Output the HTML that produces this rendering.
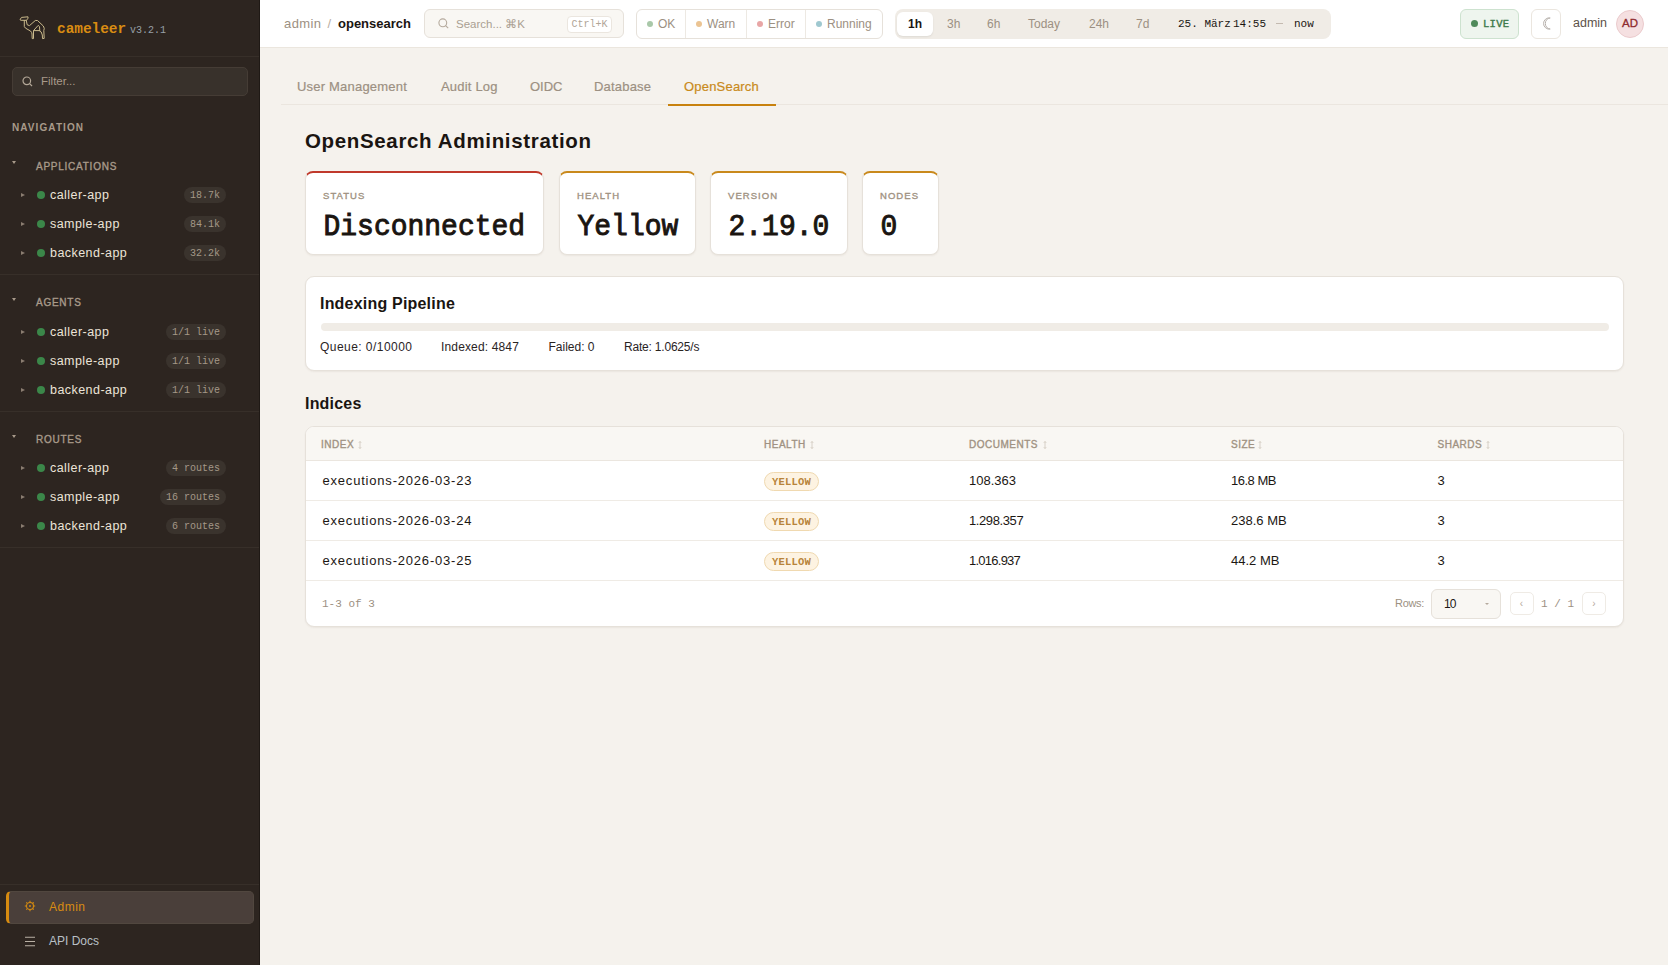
<!DOCTYPE html>
<html><head><meta charset="utf-8">
<style>
*{box-sizing:border-box;margin:0;padding:0}
html,body{width:1668px;height:965px;overflow:hidden}
body{font-family:"Liberation Sans",sans-serif;background:#f5f2ed;color:#1c1713;position:relative}
.mono{font-family:"Liberation Mono",monospace}
.abs{position:absolute;white-space:nowrap;line-height:1}
#sb{position:absolute;left:0;top:0;width:260px;height:965px;background:#2d2520;border-right:1px solid #1f1915}
.sdiv{position:absolute;left:0;width:259px;height:1px;background:#372f29}
.filter{position:absolute;left:12px;top:67px;width:236px;height:29px;border:1px solid #453c35;background:#38312b;border-radius:5px}
.navlbl{position:absolute;left:12px;font-size:10px;font-weight:bold;letter-spacing:1.08px;color:#a89a8a;line-height:1}
.sec{position:absolute;left:36px;font-size:10px;font-weight:normal;-webkit-text-stroke:0.35px #a89a8a;letter-spacing:0.75px;color:#a89a8a;line-height:1}
.caret{position:absolute;left:12px;width:0;height:0;border-left:2px solid transparent;border-right:2px solid transparent;border-top:3px solid #a89a8a}
.item{position:absolute;left:0;width:259px;height:16px}
.item .tri{position:absolute;left:21px;top:6px;width:0;height:0;border-top:2px solid transparent;border-bottom:2px solid transparent;border-left:4px solid #8a7d70}
.item .dot{position:absolute;left:36.5px;top:4px;width:8px;height:8px;border-radius:50%;background:#3b8749}
.item .nm{position:absolute;left:50px;top:2px;font-size:12.5px;letter-spacing:0.45px;color:#ece4d8;line-height:1;white-space:nowrap}
.item .bd{position:absolute;right:33px;top:0;height:16px;padding:0 6px;border-radius:8px;background:#3a332d;color:#a49888;font-family:"Liberation Mono",monospace;font-size:10px;line-height:18px;white-space:nowrap}
#top{position:absolute;left:260px;top:0;width:1408px;height:48px;background:#fff;border-bottom:1px solid #ebe6de}
.box{position:absolute;border:1px solid #e6e1da;border-radius:6px}
.sd{position:absolute;width:6px;height:6px;border-radius:50%}
.gray{color:#9c9082}
.card{position:absolute;background:#fff;border:1px solid #e6e1da;border-radius:9px;box-shadow:0 1px 2px rgba(60,40,20,0.06)}
.stat{position:absolute;background:#fff;border:1px solid #e6e1da;border-top:2.5px solid #c9891c;border-radius:8px;top:171px;height:84px;box-shadow:0 1px 2px rgba(60,40,20,0.06)}
.stat .lb{position:absolute;left:17px;top:18px;font-size:9.5px;font-weight:normal;-webkit-text-stroke:0.35px #a09282;letter-spacing:1.05px;color:#a09282;line-height:1}
.stat .vl{position:absolute;left:17.5px;top:40.5px;font-family:"Liberation Mono",monospace;font-size:28px;font-weight:normal;-webkit-text-stroke:0.9px #1a1511;color:#1a1511;line-height:1;transform:scaleY(1.04);transform-origin:0 100%}
.th{position:absolute;top:440px;font-size:10px;font-weight:normal;-webkit-text-stroke:0.35px #a09282;letter-spacing:0.5px;color:#a09282;line-height:1}
.th svg{position:absolute;top:1px}
.td{position:absolute;font-size:13px;color:#1c1713;line-height:1;white-space:nowrap}
.rowb{position:absolute;left:306px;width:1317px;height:1px;background:#efebe5}
.yb{position:absolute;left:764px;width:55px;height:19px;border:1px solid #f0d9b0;background:#fdf3e2;border-radius:10px;color:#b8843a;font-family:"Liberation Mono",monospace;font-weight:bold;font-size:10.5px;line-height:18px;text-align:center;letter-spacing:0.2px}
</style></head><body>
<div id="sb">
  <svg class="abs" style="left:0;top:0" width="56" height="48" viewBox="0 0 56 48" fill="none" stroke="#c9b98b" stroke-width="1" stroke-linejoin="round" stroke-linecap="round">
    <path d="M20.2 19.4 L21.5 17.4 L28 16.8 L28 18.6 L26.2 20.3 L21.5 20.3 Z"/>
    <path d="M24.3 20.4 L24.3 26.5 Q25 28.2 27 29 L30.5 31 Q32 32.5 32 34 L32.2 38.6 L33.5 38.6 L33.5 30.6 L38.2 25.4 L39.5 26.6 L39.8 31.2 L41.2 32 L42.3 35 L42.5 38.6 L44.2 38.4 L43.8 30.5 Q45 28.5 43.3 26 L37.5 20.5 L35.3 20.5 L29.5 25.6 L27.2 24.8 L26.2 20.3"/>
    <path d="M33.8 30.6 L39.6 30.6"/>
  </svg>
  <div class="abs mono" style="left:57px;top:22px;font-size:14.4px;font-weight:bold;color:#d98c12">cameleer</div>
  <div class="abs mono" style="left:130px;top:26px;font-size:10px;color:#98a0a8">v3.2.1</div>
  <div class="sdiv" style="top:56px"></div>
  <div class="filter">
    <svg class="abs" style="left:9px;top:8px" width="11" height="11" viewBox="0 0 11 11" fill="none" stroke="#b4a898" stroke-width="1.2"><circle cx="4.8" cy="4.8" r="3.8"/><path d="M7.6 7.6 L10 10"/></svg>
    <div class="abs" style="left:28px;top:8px;font-size:11.5px;color:#a89a8a">Filter...</div>
  </div>
  <div class="navlbl" style="top:123px">NAVIGATION</div>

  <div class="caret" style="top:161px"></div>
  <div class="sec" style="top:162px">APPLICATIONS</div>
  <div class="item" style="top:187px"><i class="tri"></i><i class="dot"></i><span class="nm">caller-app</span><span class="bd">18.7k</span></div>
  <div class="item" style="top:216px"><i class="tri"></i><i class="dot"></i><span class="nm">sample-app</span><span class="bd">84.1k</span></div>
  <div class="item" style="top:245px"><i class="tri"></i><i class="dot"></i><span class="nm">backend-app</span><span class="bd">32.2k</span></div>
  <div class="sdiv" style="top:274px"></div>

  <div class="caret" style="top:298px"></div>
  <div class="sec" style="top:298px">AGENTS</div>
  <div class="item" style="top:324px"><i class="tri"></i><i class="dot"></i><span class="nm">caller-app</span><span class="bd">1/1 live</span></div>
  <div class="item" style="top:353px"><i class="tri"></i><i class="dot"></i><span class="nm">sample-app</span><span class="bd">1/1 live</span></div>
  <div class="item" style="top:382px"><i class="tri"></i><i class="dot"></i><span class="nm">backend-app</span><span class="bd">1/1 live</span></div>
  <div class="sdiv" style="top:411px"></div>

  <div class="caret" style="top:435px"></div>
  <div class="sec" style="top:435px">ROUTES</div>
  <div class="item" style="top:460px"><i class="tri"></i><i class="dot"></i><span class="nm">caller-app</span><span class="bd">4 routes</span></div>
  <div class="item" style="top:489px"><i class="tri"></i><i class="dot"></i><span class="nm">sample-app</span><span class="bd">16 routes</span></div>
  <div class="item" style="top:518px"><i class="tri"></i><i class="dot"></i><span class="nm">backend-app</span><span class="bd">6 routes</span></div>
  <div class="sdiv" style="top:547px"></div>

  <div class="sdiv" style="top:884px"></div>
  <div class="abs" style="left:6px;top:891px;width:248px;height:33px;background:#4a3f3a;border-radius:5px;border:1px solid #51473f;border-left:3px solid #d68b10"></div>
  <svg class="abs" style="left:24px;top:900px" width="12" height="12" viewBox="0 0 12 12" fill="none" stroke="#d68b10" stroke-width="1.1"><circle cx="6" cy="6" r="3.5"/><circle cx="6" cy="6" r="0.4" fill="#d68b10"/><path d="M6 0.8V2.2M6 9.8V11.2M0.8 6H2.2M9.8 6H11.2M2.3 2.3L3.3 3.3M8.7 8.7L9.7 9.7M2.3 9.7L3.3 8.7M8.7 3.3L9.7 2.3"/></svg>
  <div class="abs" style="left:49px;top:901px;font-size:12px;letter-spacing:0.5px;color:#d98c12">Admin</div>
  <svg class="abs" style="left:24px;top:936px" width="12" height="11" viewBox="0 0 12 11" fill="none" stroke="#b9b0a4" stroke-width="1.1"><path d="M1 1.2H11M1 5.5H11M1 9.8H11"/></svg>
  <div class="abs" style="left:49px;top:935px;font-size:12px;color:#b9c0c6">API Docs</div>
</div>

<div id="top">
  <div class="abs gray" style="left:24px;top:17px;font-size:13px;letter-spacing:0.4px">admin</div>
  <div class="abs gray" style="left:67.5px;top:17px;font-size:13px;color:#b8aea2">/</div>
  <div class="abs" style="left:78px;top:17px;font-size:13px;font-weight:bold;color:#1a1511">opensearch</div>
</div>
<div class="box" style="left:424px;top:9px;width:200px;height:29px;background:#f9f7f3">
  <svg class="abs" style="left:13px;top:8px" width="11" height="11" viewBox="0 0 11 11" fill="none" stroke="#b5aa9d" stroke-width="1.1"><circle cx="4.8" cy="4.8" r="3.9"/><path d="M7.6 7.6 L10.2 10.2"/></svg>
  <div class="abs" style="left:31px;top:9px;font-size:11.5px;color:#aa9f92">Search... ⌘K</div>
  <div class="abs mono" style="left:142px;top:5.5px;width:45px;height:17px;background:#fff;border:1px solid #ebe6df;border-radius:4px;font-size:10px;line-height:15px;text-align:center;color:#b0a597">Ctrl+K</div>
</div>
<div class="box" style="left:636px;top:9px;width:247px;height:30px;background:#fff">
  <div class="abs" style="left:48px;top:0;width:1px;height:28px;background:#ede9e3"></div>
  <div class="abs" style="left:109px;top:0;width:1px;height:28px;background:#ede9e3"></div>
  <div class="abs" style="left:168px;top:0;width:1px;height:28px;background:#ede9e3"></div>
  <i class="sd" style="left:10px;top:10.5px;background:#a9c8a9"></i>
  <div class="abs gray" style="left:21px;top:8px;font-size:12px">OK</div>
  <i class="sd" style="left:58.5px;top:10.5px;background:#ebc493"></i>
  <div class="abs gray" style="left:70px;top:8px;font-size:12px">Warn</div>
  <i class="sd" style="left:119.5px;top:10.5px;background:#e8a6a6"></i>
  <div class="abs gray" style="left:131px;top:8px;font-size:12px">Error</div>
  <i class="sd" style="left:178.5px;top:10.5px;background:#9fc8d0"></i>
  <div class="abs gray" style="left:190px;top:8px;font-size:12px">Running</div>
</div>
<div class="abs" style="left:895px;top:9px;width:436px;height:30px;background:#f0ece6;border-radius:8px">
  <div class="abs" style="left:2px;top:3px;width:36px;height:24px;background:#fff;border-radius:6px;box-shadow:0 1px 2px rgba(0,0,0,0.08)"></div>
  <div class="abs" style="left:13px;top:9px;font-size:12px;font-weight:bold;color:#1a1511">1h</div>
  <div class="abs gray" style="left:52px;top:9px;font-size:12px">3h</div>
  <div class="abs gray" style="left:92px;top:9px;font-size:12px">6h</div>
  <div class="abs gray" style="left:133px;top:9px;font-size:12px">Today</div>
  <div class="abs gray" style="left:194px;top:9px;font-size:12px">24h</div>
  <div class="abs gray" style="left:241px;top:9px;font-size:12px">7d</div>
  <div class="abs mono" style="left:283px;top:10px;font-size:11px;color:#1a1511">25. März</div>
  <div class="abs mono" style="left:338px;top:10px;font-size:11px;color:#1a1511">14:55</div>
  <div class="abs" style="left:381px;top:14px;width:7px;height:1px;background:#c4bab0"></div>
  <div class="abs mono" style="left:399px;top:10px;font-size:11px;color:#1a1511">now</div>
</div>
<div class="abs" style="left:1460px;top:9px;width:59px;height:30px;background:#eef5ee;border:1px solid #cde2cf;border-radius:6px">
  <i class="sd" style="left:10px;top:10px;width:7px;height:7px;background:#4f8a5a"></i>
  <div class="abs mono" style="left:22px;top:9px;font-size:10.5px;font-weight:normal;-webkit-text-stroke:0.4px #3d7a4a;letter-spacing:0.3px;color:#3d7a4a">LIVE</div>
</div>
<div class="abs" style="left:1531px;top:9px;width:30px;height:30px;background:#fff;border:1px solid #ebe6df;border-radius:6px">
  <svg class="abs" style="left:10px;top:7px" width="10" height="13" viewBox="0 0 10 13" fill="none" stroke="#b8b2ad" stroke-width="1"><path d="M8.2 1 A5.6 5.6 0 1 0 8.2 12 A4.6 5.2 0 0 1 8.2 1Z"/></svg>
</div>
<div class="abs" style="left:1573px;top:17px;font-size:12.5px;color:#5d5249">admin</div>
<div class="abs" style="left:1616px;top:10px;width:28px;height:28px;border-radius:50%;background:#f5e0e1;border:1px solid #ebcbcd;color:#8f2a2e;font-size:11.5px;font-weight:normal;-webkit-text-stroke:0.3px #8f2a2e;line-height:24px;text-align:center">AD</div>

<!-- tabs -->
<div class="abs" style="left:281px;top:104px;width:1387px;height:1px;background:#ebe6df"></div>
<div class="abs gray" style="left:297px;top:80px;font-size:13px;letter-spacing:0.2px;-webkit-text-stroke:0.2px #9c9082">User Management</div>
<div class="abs gray" style="left:441px;top:80px;font-size:13px;letter-spacing:0.2px;-webkit-text-stroke:0.2px #9c9082">Audit Log</div>
<div class="abs gray" style="left:530px;top:80px;font-size:13px;letter-spacing:0px;-webkit-text-stroke:0.2px #9c9082">OIDC</div>
<div class="abs gray" style="left:594px;top:80px;font-size:13px;letter-spacing:0.2px;-webkit-text-stroke:0.2px #9c9082">Database</div>
<div class="abs" style="left:684px;top:80px;font-size:13px;letter-spacing:0.2px;-webkit-text-stroke:0.2px #c98a1c;color:#c98a1c">OpenSearch</div>
<div class="abs" style="left:668px;top:104px;width:108px;height:2px;background:#c8820f"></div>

<!-- content -->
<div class="abs" style="left:305px;top:131px;font-size:20.5px;font-weight:bold;letter-spacing:0.65px;color:#1a1511">OpenSearch Administration</div>

<div class="stat" style="left:305px;width:239px;border-top-color:#c0392b"><div class="lb">STATUS</div><div class="vl">Disconnected</div></div>
<div class="stat" style="left:559px;width:136.5px"><div class="lb">HEALTH</div><div class="vl">Yellow</div></div>
<div class="stat" style="left:710px;width:138px"><div class="lb">VERSION</div><div class="vl">2.19.0</div></div>
<div class="stat" style="left:862px;width:77px"><div class="lb">NODES</div><div class="vl">0</div></div>

<div class="card" style="left:305px;top:276px;width:1319px;height:94.5px">
  <div class="abs" style="left:14px;top:19px;font-size:16px;font-weight:bold;letter-spacing:0.2px;color:#1a1511">Indexing Pipeline</div>
  <div class="abs" style="left:14.5px;top:45.5px;width:1288px;height:8px;border-radius:4px;background:#f0ece6"></div>
  <div class="abs" style="left:14px;top:64px;font-size:12px;letter-spacing:0.45px;color:#2a241f">Queue: 0/10000</div>
  <div class="abs" style="left:135px;top:64px;font-size:12px;letter-spacing:0.15px;color:#2a241f">Indexed: 4847</div>
  <div class="abs" style="left:242.5px;top:64px;font-size:12px;color:#2a241f">Failed: 0</div>
  <div class="abs" style="left:318px;top:64px;font-size:12px;letter-spacing:-0.2px;color:#2a241f">Rate: 1.0625/s</div>
</div>

<div class="abs" style="left:305px;top:396px;font-size:16px;font-weight:bold;letter-spacing:0.2px;color:#1a1511">Indices</div>

<div class="card" style="left:305px;top:426px;width:1319px;height:201px;overflow:hidden">
  <div class="abs" style="left:0;top:0;width:1317px;height:34px;background:#f9f7f3;border-bottom:1px solid #ebe6df"></div>
</div>
<div class="th" style="left:321px">INDEX<svg style="left:37px" width="4" height="8" viewBox="0 0 4 8" fill="none" stroke="#cfc6bb" stroke-width="0.8"><path d="M2 0.5V7.5M0.8 1.8L2 0.5L3.2 1.8M0.8 6.2L2 7.5L3.2 6.2"/></svg></div>
<div class="th" style="left:764px">HEALTH<svg style="left:46px" width="4" height="8" viewBox="0 0 4 8" fill="none" stroke="#cfc6bb" stroke-width="0.8"><path d="M2 0.5V7.5M0.8 1.8L2 0.5L3.2 1.8M0.8 6.2L2 7.5L3.2 6.2"/></svg></div>
<div class="th" style="left:969px">DOCUMENTS<svg style="left:74px" width="4" height="8" viewBox="0 0 4 8" fill="none" stroke="#cfc6bb" stroke-width="0.8"><path d="M2 0.5V7.5M0.8 1.8L2 0.5L3.2 1.8M0.8 6.2L2 7.5L3.2 6.2"/></svg></div>
<div class="th" style="left:1231px">SIZE<svg style="left:27px" width="4" height="8" viewBox="0 0 4 8" fill="none" stroke="#cfc6bb" stroke-width="0.8"><path d="M2 0.5V7.5M0.8 1.8L2 0.5L3.2 1.8M0.8 6.2L2 7.5L3.2 6.2"/></svg></div>
<div class="th" style="left:1437.5px">SHARDS<svg style="left:48px" width="4" height="8" viewBox="0 0 4 8" fill="none" stroke="#cfc6bb" stroke-width="0.8"><path d="M2 0.5V7.5M0.8 1.8L2 0.5L3.2 1.8M0.8 6.2L2 7.5L3.2 6.2"/></svg></div>

<div class="rowb" style="top:500px"></div>
<div class="rowb" style="top:540px"></div>
<div class="rowb" style="top:580px"></div>

<div class="td" style="left:322.5px;top:474px;letter-spacing:0.8px">executions-2026-03-23</div>
<div class="yb" style="top:472px">YELLOW</div>
<div class="td" style="left:969px;top:474px">108.363</div>
<div class="td" style="left:1231px;top:474px;letter-spacing:-0.5px">16.8 MB</div>
<div class="td" style="left:1437.5px;top:474px">3</div>

<div class="td" style="left:322.5px;top:514px;letter-spacing:0.8px">executions-2026-03-24</div>
<div class="yb" style="top:512px">YELLOW</div>
<div class="td" style="left:969px;top:514px;letter-spacing:-0.4px">1.298.357</div>
<div class="td" style="left:1231px;top:514px">238.6 MB</div>
<div class="td" style="left:1437.5px;top:514px">3</div>

<div class="td" style="left:322.5px;top:554px;letter-spacing:0.8px">executions-2026-03-25</div>
<div class="yb" style="top:552px">YELLOW</div>
<div class="td" style="left:969px;top:554px;letter-spacing:-0.75px">1.016.937</div>
<div class="td" style="left:1231px;top:554px">44.2 MB</div>
<div class="td" style="left:1437.5px;top:554px">3</div>

<div class="abs mono gray" style="left:322px;top:599px;font-size:11px">1-3 of 3</div>
<div class="abs gray" style="left:1395px;top:598px;font-size:11px;letter-spacing:-0.3px">Rows:</div>
<div class="abs" style="left:1431px;top:589px;width:70px;height:30px;background:#f9f7f3;border:1px solid #e6e1da;border-radius:6px">
  <div class="abs" style="left:12px;top:8px;font-size:12px;letter-spacing:-0.8px;color:#1c1713">10</div>
  <div class="abs" style="left:53px;top:13px;width:0;height:0;border-left:2px solid transparent;border-right:2px solid transparent;border-top:2px solid #b5aa9d"></div>
</div>
<div class="abs" style="left:1509.5px;top:592px;width:24px;height:23px;border:1px solid #efebe5;border-radius:5px;font-size:10px;color:#b5aa9d;text-align:center;line-height:21px">‹</div>
<div class="abs mono gray" style="left:1541px;top:599px;font-size:11px">1 / 1</div>
<div class="abs" style="left:1582px;top:592px;width:24px;height:23px;border:1px solid #efebe5;border-radius:5px;font-size:10px;color:#b5aa9d;text-align:center;line-height:21px">›</div>
</body></html>
